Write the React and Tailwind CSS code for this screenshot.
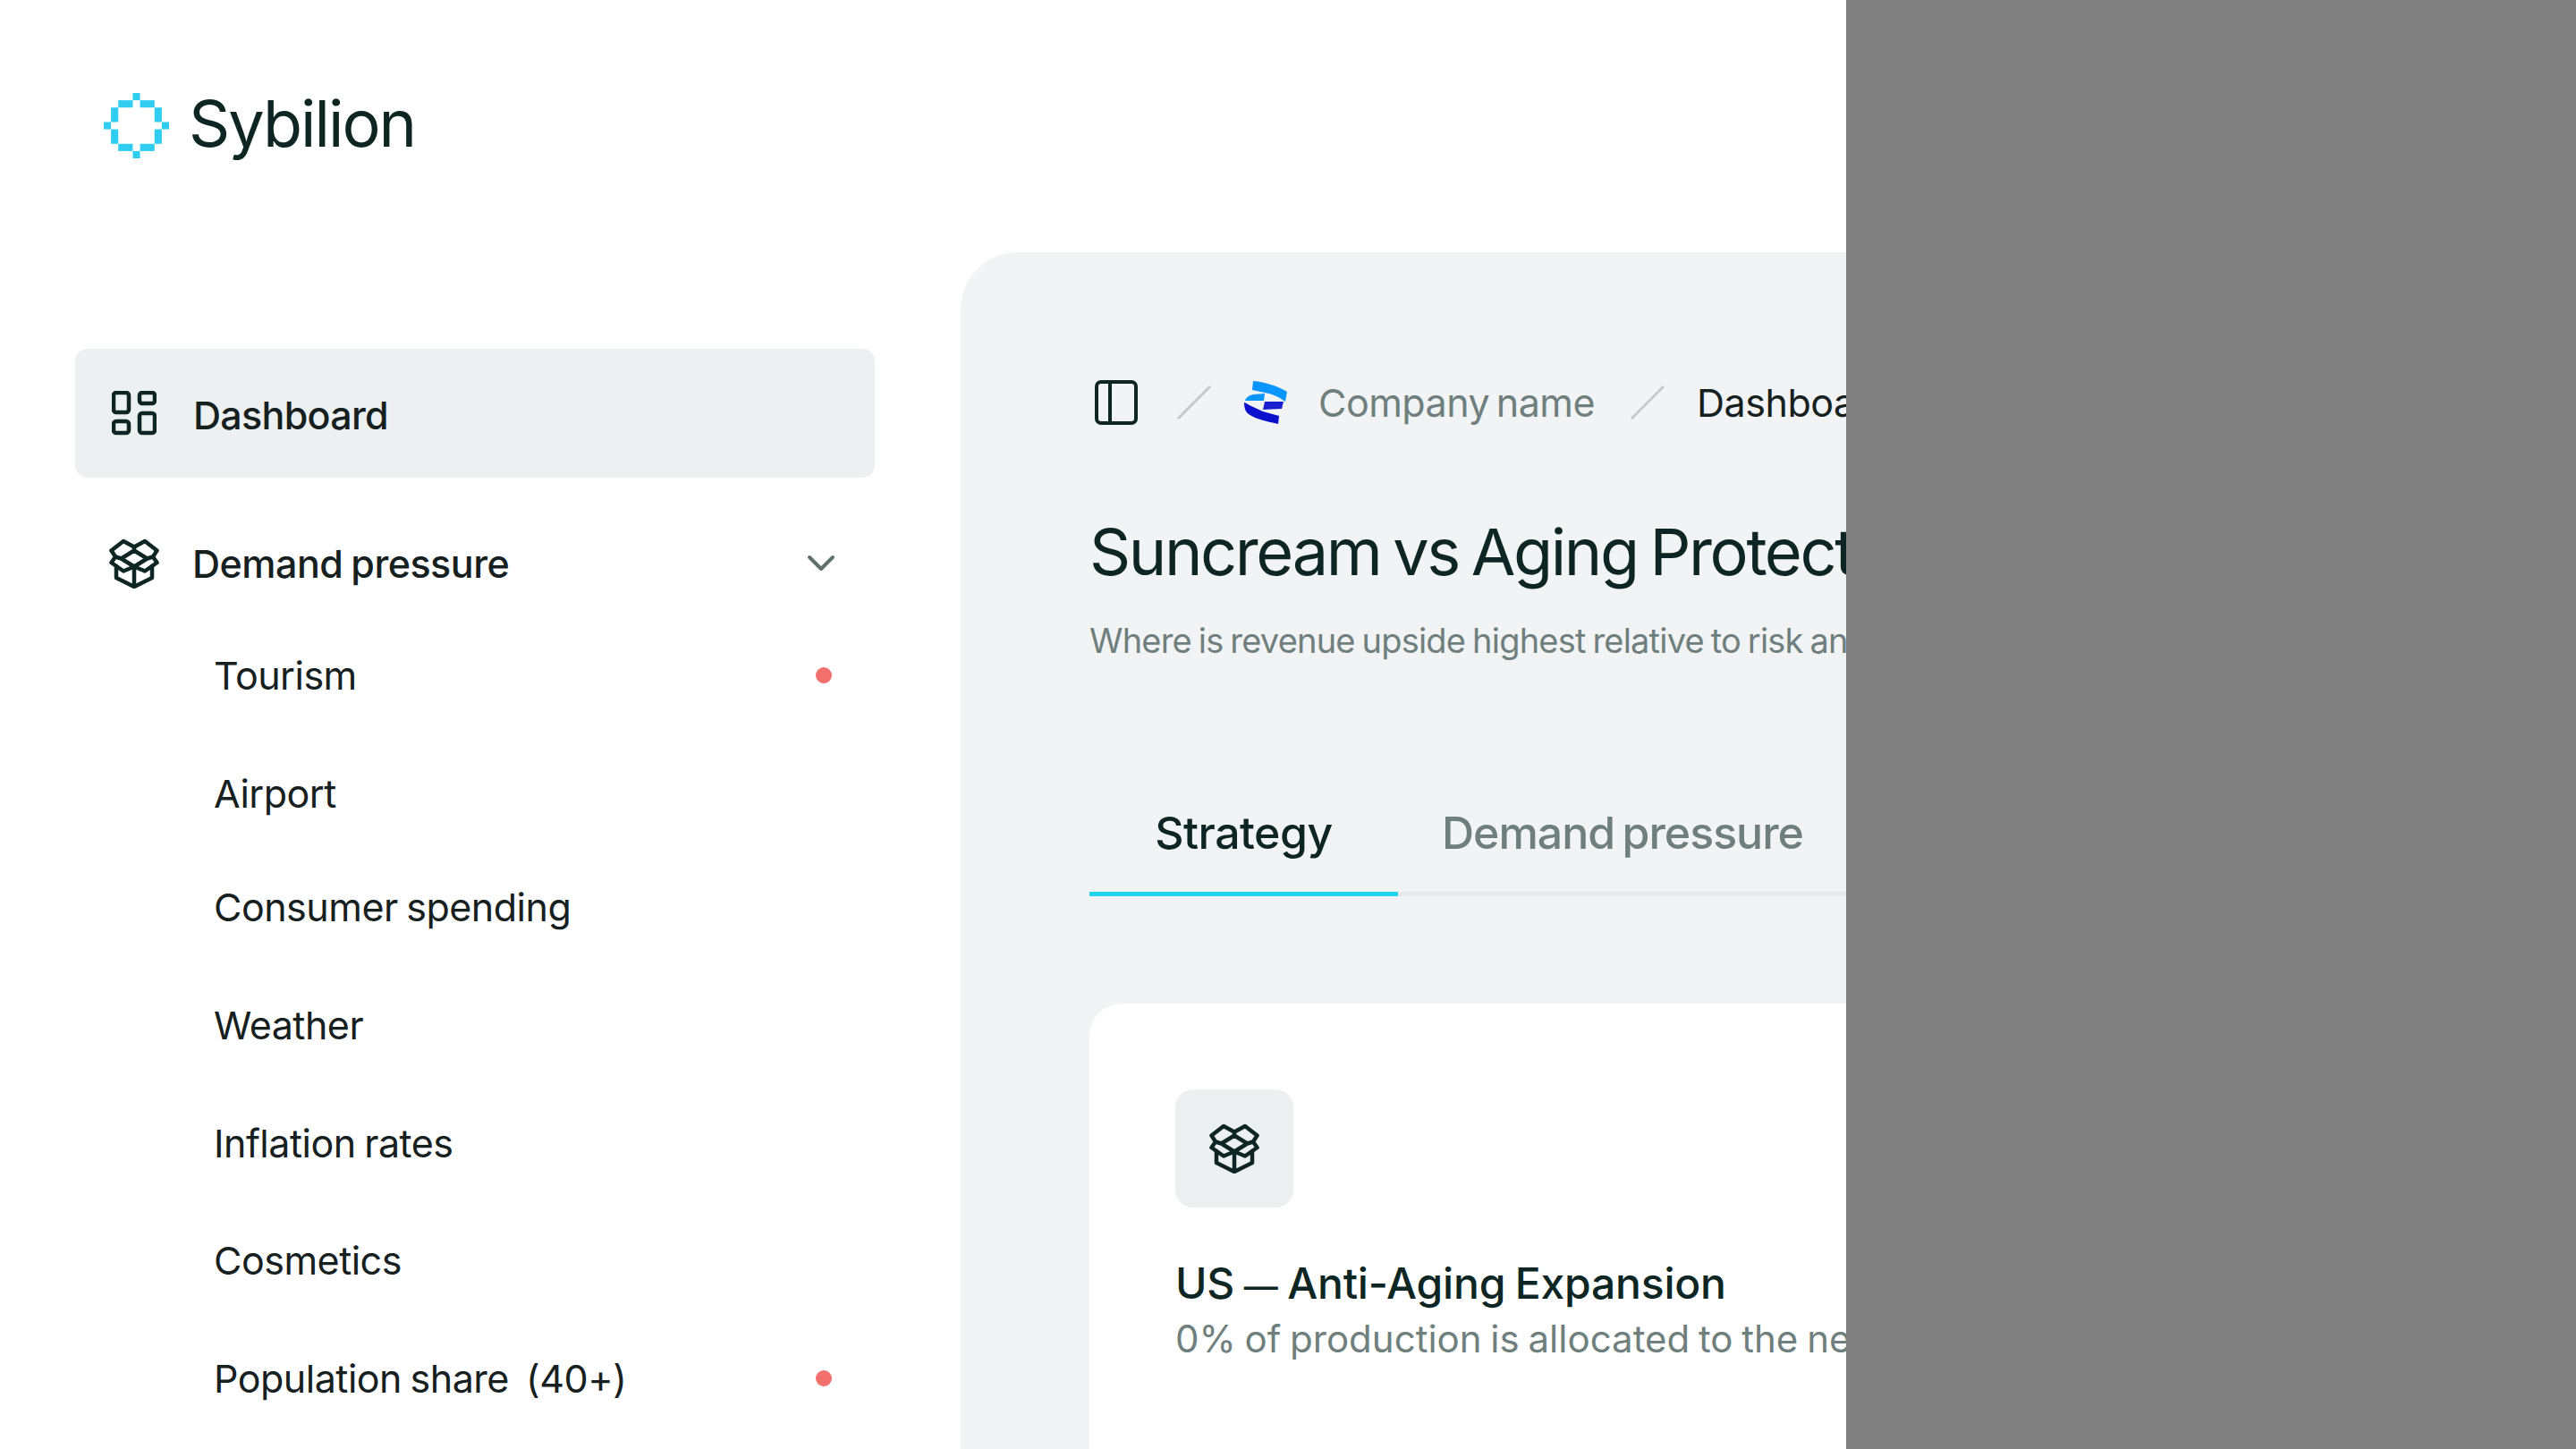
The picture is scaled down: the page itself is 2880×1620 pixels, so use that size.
const font = { fontFamily: 'Inter, sans-serif' };

const BoxIcon = ({ className }) => (
  <svg viewBox="0 0 56 56" fill="none" stroke="currentColor" strokeWidth="4.500" strokeLinejoin="round" strokeLinecap="round" className={className}>
    <path d="M16 3 28 9.500 40 3 53.500 13.500 49 20.500 53.500 27 40 36.500 28 31.500 16 36.500 2.500 27 7 20.500 2.500 13.500Z" />
    <path d="M28 9.500V13.500L13.500 22.500 28 31.500 42.500 22.500 28 13.500 M7 20.500 13.500 22.500 M49 20.500 42.500 22.500" />
    <path d="M8 31V44L28 54 48 44V31M28 31.500V54" />
  </svg>
);

const GridIcon = () => (
  <svg viewBox="0 0 50 50" fill="none" stroke="#0d2623" strokeWidth="4.500" className="w-[50px] h-[50px] shrink-0">
    <rect x="2" y="2" width="17" height="22" rx="3" />
    <rect x="31" y="2" width="17" height="12" rx="3" />
    <rect x="2" y="34" width="17" height="13" rx="3" />
    <rect x="31" y="25" width="17" height="22" rx="3" />
  </svg>
);

const Logo = () => (
  <svg viewBox="0 0 9 9" fill="#2fcdf0" className="w-[73px] h-[73px] shrink-0 mt-[1px]">
    <rect x="4" y="0" width="1" height="1" />
    <rect x="2" y="1" width="2" height="1" />
    <rect x="5" y="1" width="2" height="1" />
    <rect x="1" y="2" width="1" height="2" />
    <rect x="7" y="2" width="1" height="2" />
    <rect x="0" y="4" width="1" height="1" />
    <rect x="8" y="4" width="1" height="1" />
    <rect x="1" y="5" width="1" height="2" />
    <rect x="7" y="5" width="1" height="2" />
    <rect x="2" y="7" width="2" height="1" />
    <rect x="5" y="7" width="2" height="1" />
    <rect x="4" y="8" width="1" height="1" />
  </svg>
);

const CompanyLogo = () => (
  <svg viewBox="0 0 49 48" className="w-[49px] h-[48px] shrink-0 ml-[37px]">
    <path d="M10 0C24 1 38 6 48 12L46 23C38 17 30 14 23 13L9 10Z" fill="#0a95ff" />
    <path d="M1 22C2 18 6 16 10 15L23 14L22 22H10Z" fill="#0a95ff" />
    <path d="M23 23H44L42 31L21 32Z" fill="#1a1fd0" />
    <path d="M0 24C1 24 3 25 4 26L10 29L21 34L39 39L38 48C24 45 12 42 5 37C1 34 0 29 0 24Z" fill="#0b10cc" />
  </svg>
);

const Slash = ({ className }) => (
  <svg viewBox="0 0 38 38" className={`w-[38px] h-[38px] shrink-0 ${className}`} stroke="#c4c9c9" strokeWidth="3" fill="none">
    <path d="M1 37 37 1" />
  </svg>
);

const subItems = [
  { label: 'Tourism', h: 'h-[138px]', dot: true },
  { label: 'Airport', h: 'h-[126px]' },
  { label: 'Consumer spending', h: 'h-[128px]' },
  { label: 'Weather', h: 'h-[136px]' },
  { label: 'Inflation rates', h: 'h-[128px]' },
  { label: 'Cosmetics', h: 'h-[134px]' },
  { label: 'Population share  (40+)', h: 'h-[130px]', dot: true },
];

export default function App() {
  return (
    <div style={font} className="flex w-[2880px] h-[1620px] overflow-hidden bg-white text-[#0d2623]">
      <aside className="w-[1074px] shrink-0 pl-[84px] pr-[96px]">
        <div className="h-[282px] pt-[103px] pl-[32px] flex items-start gap-[22px]">
          <Logo />
          <span className="text-[72px] leading-[70px] tracking-[-2px]">Sybilion</span>
        </div>
        <div className="mt-[108px] h-[144px] rounded-[14px] bg-[#ecf0f1] flex items-center pl-[41px] gap-[41px]">
          <GridIcon />
          <span className="text-[43px] leading-[52px] mt-[3px] tracking-[-0.7px] font-medium text-[#16201f]">Dashboard</span>
        </div>
        <div className="mt-[40px] h-[112px] flex items-center pl-[38px] gap-[37px]">
          <BoxIcon className="w-[56px] h-[56px] shrink-0" />
          <span className="text-[43px] tracking-[-0.5px] font-medium text-[#16201f] flex-1 [word-spacing:-2px]">Demand pressure</span>
          <svg viewBox="0 0 32 20" fill="none" stroke="#5f6f6d" strokeWidth="4" strokeLinecap="round" strokeLinejoin="round" className="w-[32px] h-[20px] mr-[44px]">
            <path d="M3 3 16 16 29 3" />
          </svg>
        </div>
        <div className="flex flex-col">
          {subItems.map((item) => (
            <div key={item.label} className={`${item.h} shrink-0 flex items-center pl-[155px] pr-[48px] justify-between`}>
              <span className="text-[43px] tracking-[-0.5px] [word-spacing:-2px] whitespace-pre text-[#16201f]">{item.label}</span>
              {item.dot && <span className="w-[18px] h-[18px] rounded-full bg-[#f2706b]" />}
            </div>
          ))}
        </div>
      </aside>

      <main className="w-[990px] shrink-0 pt-[282px] overflow-hidden">
        <div className="w-[1700px] h-[1400px] bg-[#f1f3f5] rounded-tl-[64px] pl-[144px]">
          <div className="pt-[143px] flex items-center">
            <svg viewBox="0 0 48 50" fill="none" stroke="#0d2623" strokeWidth="4" className="w-[48px] h-[50px] ml-[6px] shrink-0">
              <rect x="2" y="2" width="44" height="46" rx="5" />
              <path d="M17 2v46" />
            </svg>
            <Slash className="ml-[44px]" />
            <CompanyLogo />
            <span className="ml-[34px] text-[43px] leading-[50px] tracking-[-0.5px] [word-spacing:-4px] text-[#6f7f7d]">Company name</span>
            <Slash className="ml-[40px]" />
            <span className="ml-[36px] text-[43px] leading-[50px] tracking-[-0.5px] text-[#16201f]">Dashboard</span>
          </div>
          <h1 className="mt-[98px] text-[72px] leading-[88px] font-normal tracking-[-2.400px] [word-spacing:-4px] whitespace-nowrap">Suncream vs Aging Protection</h1>
          <p className="mt-[29px] text-[38px] leading-[52px] tracking-[-0.8px] [word-spacing:-2px] text-[#6f7f7d] whitespace-nowrap">Where is revenue upside highest relative to risk and capacity?</p>
          <div className="mt-[123px] h-[137px] flex border-b-[5px] border-[#e6eaeb] w-[1500px]">
            <div className="w-[345px] h-[137px] shrink-0 flex items-center justify-center border-b-[5px] border-[#22d3ee] text-[50px] tracking-[-0.5px] font-medium">Strategy</div>
            <div className="h-[137px] pl-[49px] pb-[5px] flex items-center text-[50px] tracking-[-1px] [word-spacing:-4px] font-medium text-[#6f7f7d]">Demand pressure</div>
          </div>
          <div className="mt-[120px] w-[1400px] h-[600px] bg-white rounded-tl-[36px] pl-[96px] pt-[96px]">
            <div className="w-[132px] h-[132px] rounded-[20px] bg-[#ecf0f1] flex items-center justify-center">
              <BoxIcon className="w-[56px] h-[56px]" />
            </div>
            <h2 className="mt-[50px] h-[70px] text-[48px] leading-[70px] font-medium tracking-[-0.2px] [word-spacing:-2px] whitespace-nowrap">US <span className="text-[38px] leading-none">—</span> Anti-Aging Expansion</h2>
            <p className="text-[42px] leading-[54px] [word-spacing:-2px] text-[#6f7f7d] whitespace-nowrap">0% of production is allocated to the new market</p>
          </div>
        </div>
      </main>

      <div className="flex-1 bg-[#808080]" />
    </div>
  );
}
